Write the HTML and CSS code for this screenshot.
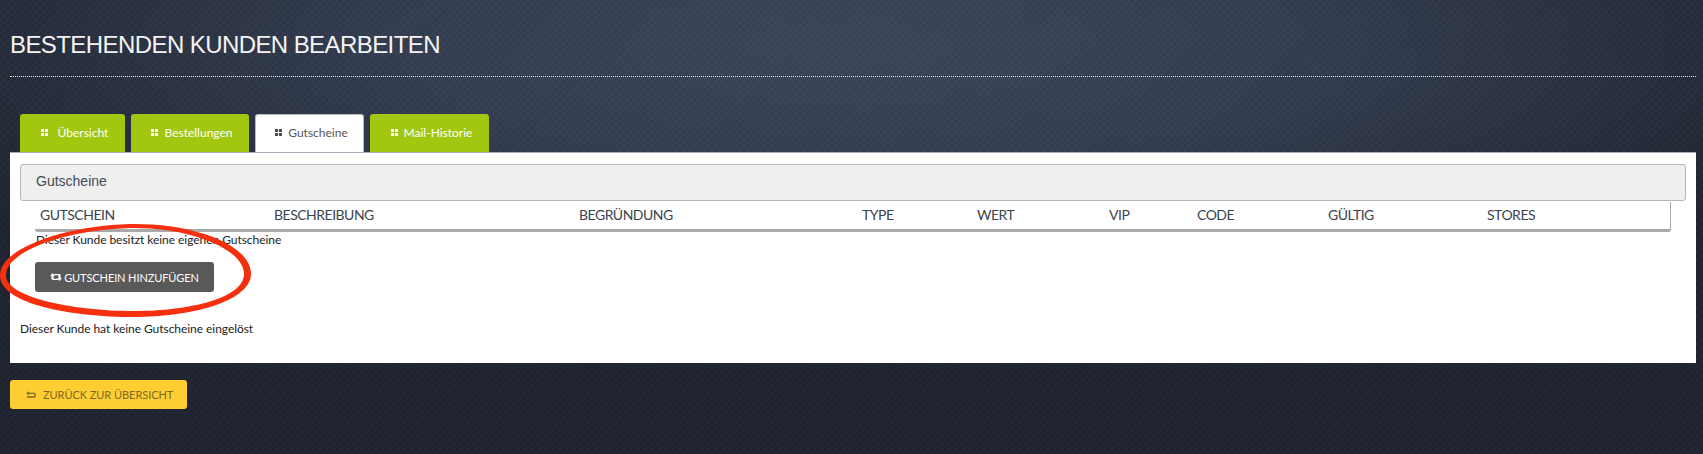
FILE: index.html
```html
<!DOCTYPE html>
<html lang="de">
<head>
<meta charset="utf-8">
<title>Bestehenden Kunden bearbeiten</title>
<link rel="stylesheet" href="styles.css">
</head>
<body>
<main class="page">
  <h1 class="title">BESTEHENDEN KUNDEN BEARBEITEN</h1>
  <nav class="tabs">
    <a class="tab tab-a"><svg class="grid-icon" viewBox="0 0 8 8"><rect width="3.5" height="3.5" rx=".8"/><rect x="4.5" width="3.5" height="3.5" rx=".8"/><rect y="4.5" width="3.5" height="3.5" rx=".8"/><rect x="4.5" y="4.5" width="3.5" height="3.5" rx=".8"/></svg><span class="label-wide">Übersicht</span></a>
    <a class="tab tab-b"><svg class="grid-icon" viewBox="0 0 8 8"><rect width="3.5" height="3.5" rx=".8"/><rect x="4.5" width="3.5" height="3.5" rx=".8"/><rect y="4.5" width="3.5" height="3.5" rx=".8"/><rect x="4.5" y="4.5" width="3.5" height="3.5" rx=".8"/></svg><span>Bestellungen</span></a>
    <a class="tab tab-c active"><svg class="grid-icon" viewBox="0 0 8 8"><rect width="3.5" height="3.5" rx=".8"/><rect x="4.5" width="3.5" height="3.5" rx=".8"/><rect y="4.5" width="3.5" height="3.5" rx=".8"/><rect x="4.5" y="4.5" width="3.5" height="3.5" rx=".8"/></svg><span>Gutscheine</span></a>
    <a class="tab tab-d"><svg class="grid-icon" viewBox="0 0 8 8"><rect width="3.5" height="3.5" rx=".8"/><rect x="4.5" width="3.5" height="3.5" rx=".8"/><rect y="4.5" width="3.5" height="3.5" rx=".8"/><rect x="4.5" y="4.5" width="3.5" height="3.5" rx=".8"/></svg><span>Mail-Historie</span></a>
  </nav>
  <section class="panel">
    <div class="panel-head">Gutscheine</div>
    <div class="table-head">
      <span>Gutschein</span><span>Beschreibung</span><span>Begründung</span><span>Type</span><span>Wert</span><span>VIP</span><span>Code</span><span>Gültig</span><span>Stores</span>
    </div>
    <p class="note">Dieser Kunde besitzt keine eigenen Gutscheine</p>
    <button class="add-btn"><svg class="retweet" viewBox="0 0 12 8"><path d="M2.5 0 5 3H3.6V5.8H7.4L8.4 7H3C2 7 1.4 6.5 1.4 5.6V3H0Z"/><path d="M9.5 8 7 5H8.4V2.2H4.6L3.6 1H9C10 1 10.6 1.5 10.6 2.4V5H12Z"/></svg>GUTSCHEIN HINZUFÜGEN</button>
    <p class="note-low">Dieser Kunde hat keine Gutscheine eingelöst</p>
  </section>
  <button class="back-btn"><svg class="back-icon" viewBox="0 0 11 8"><path d="M3.4 0 .2 2.2 3.4 4.4V3H8.6C9.1 3 9.4 3.3 9.4 3.8V4.6C9.4 5.1 9.1 5.4 8.6 5.4H1V7H9C10.1 7 10.8 6.3 10.8 5.2V3.2C10.8 2.1 10.1 1.4 9 1.4H3.4Z"/></svg>ZURÜCK ZUR ÜBERSICHT</button>
</main>
<svg class="ring" viewBox="0 0 260 100" aria-hidden="true"><path fill-rule="evenodd" d="M130 1C195 0 251 22 251 51C251 78 192 94 134 94C68 94 -1 80 0 52C0 26 62 3 130 1ZM130 5C66 7 6 28 6 52C5 74 72 88 134 88C190 88 244 75 244 51C244 26 190 4 130 5Z"/></svg>
</body>
</html>
```
FILE: styles.css
```css
* { box-sizing: border-box; }
html, body { height: 100%; }
body {
  margin: 0;
  overflow: hidden;
  position: relative;
  font-family: "Lato", sans-serif;
  background-color: #262c3a;
  background-image:
    repeating-linear-gradient(45deg, rgba(0,0,0,.04) 0 2px, transparent 2px 5px),
    repeating-linear-gradient(-45deg, rgba(255,255,255,.02) 0 2px, transparent 2px 5px),
    radial-gradient(ellipse 62% 62% at 50% 10%, #3b465b 0%, #333d50 45%, #262c3a 80%, #1f2430 100%);
}
.page { padding: 0 7px 0 10px; }
.title {
  margin: 0;
  height: 77px;
  padding-top: 30px;
  border-bottom: 1px dotted #e8e8e8;
  font: 300 24px/30px "Liberation Sans", sans-serif;
  color: #f4f4f4;
  letter-spacing: -.58px;
}
.tabs {
  display: flex;
  gap: 6px;
  margin-top: 37px;
  padding-left: 10px;
  height: 38px;
}
.tab {
  display: flex;
  align-items: center;
  justify-content: center;
  height: 38px;
  padding: 0 0 2px 4px;
  background: #a2c711;
  border-radius: 3px 3px 0 0;
  color: #fff;
  font-size: 12px;
}
.tab-a { width: 105px; }
.tab-b { width: 118px; }
.tab-c { width: 109px; }
.tab-d { width: 119px; }
.tab.active {
  background: #fff;
  color: #555;
  border: 1px solid #bbb;
  border-bottom: 0;
}
.grid-icon { width: 7px; height: 7px; margin-right: 6px; fill: currentColor; flex: none; }
.tab.active .grid-icon { fill: #444; }
.label-wide { margin-left: 4px; }
.panel {
  height: 211px;
  background: #fff;
  border-top: 1px solid #aab;
  padding: 11px 10px 0;
  position: relative;
}
.panel-head {
  height: 37px;
  background: #efefef;
  border: 1px solid #b5b5b5;
  border-radius: 3px;
  padding-left: 15px;
  font: 14px/33px "Liberation Sans", sans-serif;
  color: #444b55;
}
.table-head {
  display: grid;
  grid-template-columns: 234px 305px 283px 115px 132px 88px 131px 159px 1fr;
  width: 1636px;
  height: 30px;
  margin: 1px 0 0 15px;
  padding-left: 5px;
  border: solid #a9a9a9;
  border-width: 0 1px 3px 0;
  border-radius: 0 0 3px 3px;
  font-size: 14px;
  line-height: 25px;
  letter-spacing: -.5px;
  color: #3c4350;
  text-transform: uppercase;
}
.note {
  margin: 0 0 0 16px;
  font-size: 12px;
  line-height: 15px;
  letter-spacing: -.05px;
  color: #222;
}
.add-btn {
  display: flex;
  align-items: center;
  justify-content: center;
  width: 179px;
  height: 30px;
  margin: 15px 0 0 15px;
  padding: 0;
  background: #595959;
  border: 0;
  border-radius: 3px;
  color: #fff;
  font: 11px "Lato", sans-serif;
  letter-spacing: -.1px;
}
.retweet { width: 12px; height: 8px; margin-right: 2px; fill: #fff; }
.note-low {
  margin: 29px 0 0;
  font-size: 12px;
  line-height: 15px;
  letter-spacing: -.05px;
  color: #222;
}
.back-btn {
  display: flex;
  align-items: center;
  width: 177px;
  height: 29px;
  margin-top: 17px;
  padding: 0 0 0 16px;
  background: #ffce33;
  border: 0;
  border-radius: 3px;
  color: #7d6a25;
  font: 11px "Lato", sans-serif;
  letter-spacing: -.05px;
}
.back-icon { width: 10px; height: 8px; margin-right: 7px; fill: #7d6a25; }
.ring {
  position: absolute;
  left: 0;
  top: 223px;
  width: 260px;
  height: 100px;
  pointer-events: none;
}
.ring path { fill: #f5300f; }
```
